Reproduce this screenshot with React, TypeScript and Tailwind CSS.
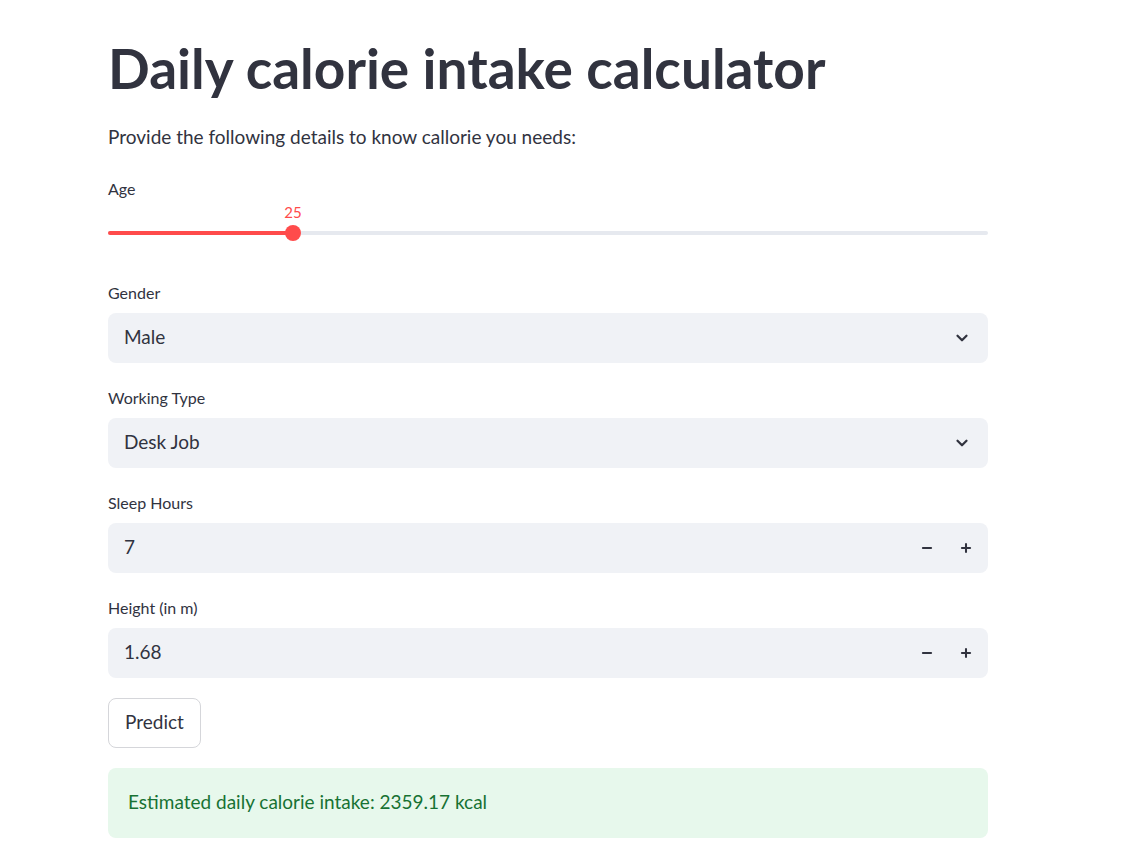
import { ChevronDown, Minus, Plus } from "lucide-react"

const font = { fontFamily: '"Source Sans Pro", Lato, "Noto Sans", sans-serif' }

function Label({ text }: { text: string }) {
  return <div className="text-[16px] text-[#31333f] leading-5 mb-[10px]">{text}</div>
}

function Select({ label, value }: { label: string; value: string }) {
  return (
    <div>
      <Label text={label} />
      <div className="h-[50px] rounded-lg bg-[#f0f2f6] flex items-center justify-between pl-4 pr-[17px]">
        <span className="text-[19px] text-[#31333f]">{value}</span>
        <ChevronDown size={18} strokeWidth={3} className="text-[#31333f]" />
      </div>
    </div>
  )
}

function NumberInput({ label, value }: { label: string; value: string }) {
  return (
    <div>
      <Label text={label} />
      <div className="h-[50px] rounded-lg bg-[#f0f2f6] flex items-center pl-4 pr-[15px]">
        <span className="text-[19px] text-[#31333f] flex-1">{value}</span>
        <div className="flex items-center gap-[25px]">
          <Minus size={14} strokeWidth={3.5} className="text-[#31333f]" />
          <Plus size={14} strokeWidth={3.5} className="text-[#31333f]" />
        </div>
      </div>
    </div>
  )
}

export default function App() {
  const pct = (293 - 108) / 880

  return (
    <main className="min-h-screen bg-white" style={font}>
      <div className="w-[880px] ml-[108px] pt-[38px]">

        <h1 className="text-[55px] font-bold text-[#31333f] leading-[60px]">
          Daily calorie intake calculator
        </h1>

        <p className="text-[19px] text-[#31333f] mt-[25px]">
          Provide the following details to know callorie you needs:
        </p>

        {/* slider */}
        <div className="mt-[27px]">
          <Label text="Age" />
          <div className="relative h-[37px]">
            <div className="absolute top-[22px] left-0 right-0 h-[4px] rounded bg-[#e6e9ef]" />
            <div
              className="absolute top-[22px] left-0 h-[4px] rounded bg-[#ff4b4b]"
              style={{ width: `${pct * 100}%` }}
            />
            <div
              className="absolute top-[16px] w-4 h-4 -ml-2 rounded-full bg-[#ff4b4b]"
              style={{ left: `${pct * 100}%` }}
            />
            <div
              className="absolute top-[-8px] -translate-x-1/2 text-[15px] text-[#ff4b4b]"
              style={{ left: `${pct * 100}%` }}
            >
              25
            </div>
          </div>
        </div>

        <div className="mt-[37px] flex flex-col gap-[25px]">
          <Select label="Gender" value="Male" />
          <Select label="Working Type" value="Desk Job" />
          <NumberInput label="Sleep Hours" value="7" />
          <NumberInput label="Height (in m)" value="1.68" />
        </div>

        <button className="mt-[20px] h-[50px] px-4 rounded-lg border border-[#d5d6da] bg-white text-[19px] text-[#31333f]">
          Predict
        </button>

        <div className="mt-[20px] h-[70px] rounded-lg bg-[#e7f8ec] flex items-center px-5">
          <span className="text-[19px] text-[#177233]">
            Estimated daily calorie intake: 2359.17 kcal
          </span>
        </div>

      </div>
    </main>
  )
}
